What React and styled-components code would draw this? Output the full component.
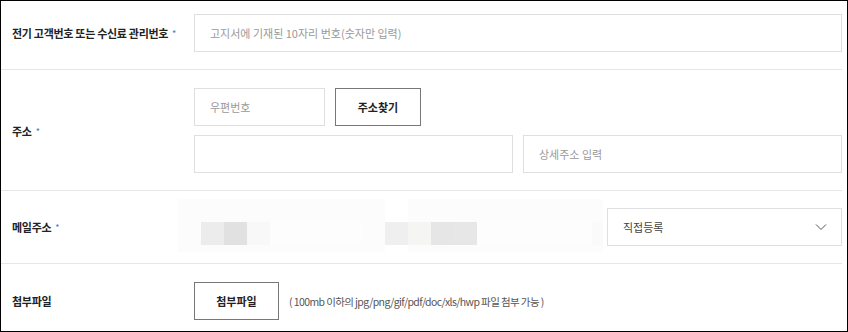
import styled, { createGlobalStyle } from "styled-components";

const GlobalStyle = createGlobalStyle`
  * { box-sizing: border-box; }
  body {
    margin: 0;
    background: #fff;
    font-family: "Noto Sans CJK KR", "Noto Sans", sans-serif;
    color: #222;
  }
`;

const Frame = styled.div`
  width: 848px;
  height: 332px;
  border: 1px solid #000;
  padding-right: 5px;
  background: #fff;
`;

const Row = styled.div`
  display: flex;
  align-items: center;
  padding: ${(p) => p.$pad || "17px 0"};
  border-bottom: ${(p) => (p.$last ? "none" : "1px solid #e6e6e6")};
`;

const Label = styled.div`
  flex: 0 0 193px;
  padding-left: 11px;
  font-size: 11px;
  font-weight: 700;
  letter-spacing: -0.3px;
  color: #222;
  white-space: nowrap;
`;

const Star = styled.span`
  margin-left: 4px;
  color: #3b7bd0;
  font-size: 9px;
  font-weight: 400;
  vertical-align: 1px;
`;

const Field = styled.div`
  flex: 1;
  display: flex;
  flex-direction: column;
  gap: ${(p) => p.$gap || "0"};
`;

const Line = styled.div`
  display: flex;
  align-items: center;
  gap: ${(p) => p.$gap || "10px"};
`;

const Input = styled.input`
  display: block;
  width: ${(p) => p.$w || "100%"};
  flex: ${(p) => (p.$w ? "0 0 auto" : "1")};
  min-width: 0;
  height: 38px;
  margin: 0;
  padding: 0 15px;
  border: 1px solid #dfdfdf;
  border-radius: 0;
  background: #fff;
  font-family: inherit;
  font-size: 11px;
  color: #333;
  outline: none;

  &::placeholder {
    color: #999;
  }
`;

const Button = styled.button`
  flex: 0 0 auto;
  width: ${(p) => p.$w};
  height: 38px;
  margin: 0;
  padding: 0;
  border: 1px solid #777;
  border-radius: 0;
  background: #fff;
  font-family: inherit;
  font-size: 11px;
  font-weight: 700;
  color: #222;
`;

const Note = styled.span`
  margin-left: 10px;
  font-size: 10.5px;
  letter-spacing: -0.6px;
  color: #555;
  white-space: nowrap;
`;

/* blurred (redacted) e-mail value: a 23px pixel mosaic */
const Mosaic = styled.div`
  flex: 0 0 425px;
  margin: -9px 0 -6px -16px;
  display: grid;
  grid-template-columns: repeat(18, 23px) 11px;
  grid-template-rows: 23px 23px 7px;
`;

const Cell = styled.div`
  background: ${(p) => p.$tone};
`;

const Select = styled.div`
  flex: 1;
  margin-left: 4px;
  height: 38px;
  display: flex;
  align-items: center;
  justify-content: space-between;
  padding: 0 14px 0 15px;
  border: 1px solid #dfdfdf;
  font-size: 11px;
  color: #444;
`;

const F = "#fcfcfc";
const W = "#ffffff";
const mosaicRows = [
  [F, F, F, F, F, F, F, F, F, W, F, F, F, F, F, F, F, F, F],
  [F, "#ececec", "#e1e1e1", "#f8f8f8", "#fdfdfd", "#fdfdfd", "#fdfdfd", "#fdfdfd", F, "#efefef", "#f5f5f4", "#e6e6e6", "#e7e7e7", "#fdfdfd", "#fdfdfd", "#fdfdfd", "#fdfdfd", "#fdfdfd", "#fafafa"],
  [F, F, F, F, F, F, F, F, F, W, F, F, F, F, F, F, F, F, F],
];

function Chevron() {
  return (
    <svg width="12" height="8" viewBox="0 0 12 8">
      <polyline points="1,1.5 6,6.5 11,1.5" fill="none" stroke="#555" strokeWidth="1" />
    </svg>
  );
}

export default function App() {
  return (
    <>
      <GlobalStyle />
      <Frame>
        <Row $pad="13px 0 17px">
          <Label>
            전기 고객번호 또는 수신료 관리번호<Star>*</Star>
          </Label>
          <Field>
            <Line>
              <Input placeholder="고지서에 기재된 10자리 번호(숫자만 입력)" />
            </Line>
          </Field>
        </Row>

        <Row $pad="18px 0 17px">
          <Label>
            주소<Star>*</Star>
          </Label>
          <Field $gap="9px">
            <Line>
              <Input $w="131px" placeholder="우편번호" />
              <Button $w="86px">주소찾기</Button>
            </Line>
            <Line>
              <Input />
              <Input placeholder="상세주소 입력" />
            </Line>
          </Field>
        </Row>

        <Row>
          <Label>
            메일주소<Star>*</Star>
          </Label>
          <Field>
            <Line $gap="0">
              <Mosaic>
                {mosaicRows.map((r, i) =>
                  r.map((tone, j) => <Cell key={`${i}-${j}`} $tone={tone} />)
                )}
              </Mosaic>
              <Select>
                <span>직접등록</span>
                <Chevron />
              </Select>
            </Line>
          </Field>
        </Row>

        <Row $pad="18px 0 11px" $last>
          <Label>첨부파일</Label>
          <Field>
            <Line $gap="0">
              <Button $w="85px">첨부파일</Button>
              <Note>( 100mb 이하의 jpg/png/gif/pdf/doc/xls/hwp 파일 첨부 가능 )</Note>
            </Line>
          </Field>
        </Row>
      </Frame>
    </>
  );
}
